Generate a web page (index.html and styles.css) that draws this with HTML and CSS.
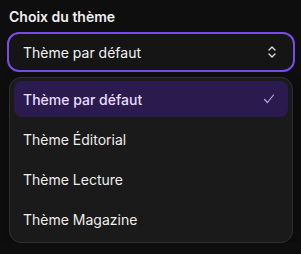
FILE: index.html
```html
<!DOCTYPE html>
<html lang="fr">
<head>
    <meta charset="UTF-8">
    <meta name="viewport" content="width=device-width, initial-scale=1.0">
    <title>Choix du thème</title>
    <link rel="stylesheet" href="styles.css">
</head>
<body>
    <div class="field">
        <label class="label">Choix du thème</label>
        <div class="select">
            <span>Thème par défaut</span>
            <svg class="chevrons" width="10" height="14" viewBox="0 0 10 14">
                <path d="M2 5l3-3 3 3M2 9l3 3 3-3" fill="none" stroke="#d8d8d8" stroke-width="1.4" stroke-linecap="round" stroke-linejoin="round"/>
            </svg>
        </div>
        <ul class="menu">
            <li class="item selected">
                <span>Thème par défaut</span>
                <svg class="check" width="12" height="12" viewBox="0 0 12 12">
                    <path d="M1.5 6.5l3 3 6-7.5" fill="none" stroke="#b9a6ee" stroke-width="1.2" stroke-linecap="round" stroke-linejoin="round"/>
                </svg>
            </li>
            <li class="item">Thème Éditorial</li>
            <li class="item">Thème Lecture</li>
            <li class="item">Thème Magazine</li>
        </ul>
    </div>
</body>
</html>
```

FILE: styles.css
```css
* {
    margin: 0;
    padding: 0;
    box-sizing: border-box;
    font-family: Inter, "Noto Sans", sans-serif;
}

body {
    background: #0e0e0e;
    color: #ececec;
}

.field {
    padding: 8px 6px 0 7px;
}

.label {
    display: block;
    margin-left: 2px;
    margin-bottom: 7px;
    font-size: 14px;
    line-height: 17px;
    font-weight: 600;
    color: #f0f0f0;
}

.select {
    height: 40px;
    display: flex;
    align-items: center;
    justify-content: space-between;
    padding: 0 16px 0 14px;
    border: 2px solid #774ce8;
    border-radius: 12px;
    background: #151515;
    font-size: 14px;
    color: #f2f2f2;
}

.chevrons {
    display: block;
}

.menu {
    list-style: none;
    margin: 5px 2px 0 2px;
    padding: 3px 4px 5px 4px;
    border: 1px solid #303030;
    border-radius: 12px;
    background: #1a1a1a;
    display: flex;
    flex-direction: column;
    gap: 4px;
    box-shadow: 0 4px 12px rgba(0, 0, 0, 0.4);
}

.item {
    height: 36px;
    display: flex;
    align-items: center;
    justify-content: space-between;
    padding: 0 13px 0 9px;
    border-radius: 8px;
    font-size: 14px;
    color: #ededed;
}

.item.selected {
    background: #2a1a4e;
    color: #e6ddff;
    font-weight: 500;
}

.check {
    display: block;
}
```
